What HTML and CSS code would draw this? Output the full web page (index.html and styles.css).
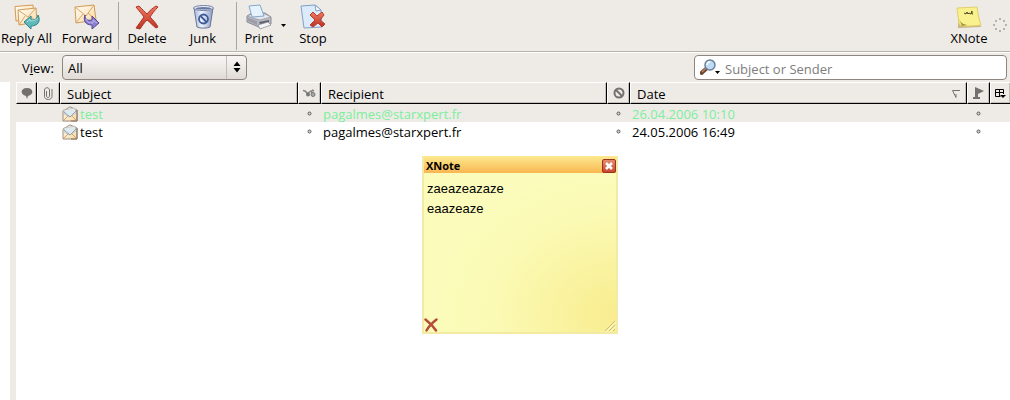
FILE: index.html
```html
<!DOCTYPE html>
<html lang="en">
<head>
    <meta charset="UTF-8">
    <meta name="viewport" content="width=device-width, initial-scale=1.0">
    <title>Mail</title>
    <link rel="stylesheet" href="styles.css">
</head>
<body>
    <!-- Shared icons -->
    <svg class="defs" aria-hidden="true">
        <defs>
            <linearGradient id="paper" x1="0" y1="0" x2="1" y2="1">
                <stop offset="0" stop-color="#fffdf4"/>
                <stop offset="1" stop-color="#f7d9a4"/>
            </linearGradient>
            <linearGradient id="red" x1="0" y1="0" x2="0" y2="1">
                <stop offset="0" stop-color="#f07a62"/>
                <stop offset="1" stop-color="#bb3020"/>
            </linearGradient>
            <linearGradient id="blue" x1="0" y1="0" x2="1" y2="0">
                <stop offset="0" stop-color="#a3b4d8"/>
                <stop offset="0.4" stop-color="#eef3fc"/>
                <stop offset="1" stop-color="#8b9bc4"/>
            </linearGradient>
        </defs>
        <symbol id="mail" viewBox="0 0 16 16">
            <path d="M1 5L8 .8l7 3.200v11H1z" fill="url(#paper)" stroke="#a08f7c"/>
            <path d="M2 4l11-2 1 5-6 4-6-3z" fill="#dfe9f0" stroke="#b3b6b8" stroke-width=".6"/>
            <path d="M1 15L6.500 9.500M15 15L9.500 9.500" fill="none" stroke="#c99a68" stroke-width=".9"/>
            <path d="M2 6l6 5 6-6" fill="none" stroke="#8f9ba5" stroke-width=".9"/>
            <path d="M15 4v11H9" fill="none" stroke="#8c745c"/>
        </symbol>
        <symbol id="dot" viewBox="0 0 5 5">
            <circle cx="2.500" cy="2.500" r="1.500" fill="#ddd" stroke="#555"/>
        </symbol>
    </svg>

    <div class="toolbar">
        <button class="tool reply">
            <svg width="28" height="26" viewBox="0 0 28 26">
                <path d="M2 2.500L20 1l1 14-18 2z" fill="url(#paper)" stroke="#d39a55"/>
                <path d="M5 6l18-2 1 14-18 3z" fill="url(#paper)" stroke="#d39a55"/>
                <path d="M5 6l10 7 8-9M6 21l6-9M24 18l-7-6" fill="none" stroke="#d8a76b"/>
                <path d="M11 18l7-6v4c4 0 6-1 7-5 3 6 0 11-7 11v3z" fill="#5fb9ba" stroke="#26858c"/>
                <path d="M14 18l3-3v2c4 0 6-1 8-3" fill="none" stroke="#a9e2df"/>
            </svg>
            <span>Reply All</span>
        </button>
        <button class="tool forward">
            <svg width="28" height="26" viewBox="0 0 28 26">
                <path d="M2 3l19-2 2 15-20 3z" fill="url(#paper)" stroke="#d39a55"/>
                <path d="M2 3l11 9 8-11M3 19l7-9M23 16l-8-7" fill="none" stroke="#d8a76b"/>
                <path d="M12 11c0 4 2 6 7 5v-4l7 7-7 6v-4c-7 0-9-5-7-10z" fill="#8b80cf" stroke="#544796"/>
                <path d="M13 15c1 3 3 4 7 4v-3l4 3" fill="none" stroke="#bdb5ef"/>
            </svg>
            <span>Forward</span>
        </button>
        <div class="separator"></div>
        <button class="tool delete">
            <svg width="26" height="26" viewBox="0 0 26 26">
                <path d="M2 3l3-1c3 3 6 6 8 8 3-4 6-6 9-8l2 1c-4 4-6 7-8 10 3 3 6 6 8 10l-2 1c-4-3-6-6-9-8-3 3-5 6-7 9l-4-1c3-4 5-7 8-11C8 10 5 7 2 3z" fill="url(#red)" stroke="#ad3428"/>
            </svg>
            <span>Delete</span>
        </button>
        <button class="tool junk">
            <svg width="26" height="26" viewBox="0 0 26 26">
                <path d="M4 4h19l-3 19c-3 1.500-10 1.500-13 0z" fill="url(#blue)" stroke="#6b7595"/>
                <ellipse cx="13.500" cy="4" rx="10" ry="2.500" fill="#e8edf8" stroke="#7582a6"/>
                <ellipse cx="13.500" cy="4.300" rx="8" ry="1.200" fill="#6a789f"/>
                <circle cx="13.500" cy="15" r="4.500" fill="none" stroke="#3e5c9a" stroke-width="1.800"/>
                <path d="M10.500 12l6 6" stroke="#3e5c9a" stroke-width="1.800"/>
            </svg>
            <span>Junk</span>
        </button>
        <div class="separator"></div>
        <button class="tool print">
            <svg width="28" height="26" viewBox="0 0 28 26">
                <path d="M2 12l5-3h13l6 4v7l-10 4-14-6z" fill="#b6b8c2" stroke="#8b8c96"/>
                <path d="M2 12l13 4 11-3-6-3H7z" fill="#e6e7ec" stroke="#95969f" stroke-width=".7"/>
                <path d="M4 2l11-1 4 11-12 1z" fill="#e6f3fd" stroke="#80a9cc"/>
                <path d="M14 18l10-2v3l-8 3z" fill="#62636c"/>
                <path d="M13 21l10-3 3 3-11 4z" fill="#f3f5f8" stroke="#888991" stroke-width=".7"/>
                <path d="M3 14l9 3v4l-9-4z" fill="#9c9da7"/>
            </svg>
            <span>Print</span>
        </button>
        <button class="arrow" aria-label="Print options">
            <svg width="5" height="3" viewBox="0 0 5 3"><path d="M0 0h5L2.500 3z"/></svg>
        </button>
        <button class="tool stop">
            <svg width="26" height="26" viewBox="0 0 26 26">
                <path d="M1 2l14-1 6 5 1 17-18 1z" fill="#dcebfa" stroke="#829fc9"/>
                <path d="M15 1l1 6 5-1z" fill="#fff" stroke="#829fc9"/>
                <path d="M10 11l3-3 4 4 5-4 2 3-4 5 5 4-3 3-4-4-5 4-3-2 5-5z" fill="url(#red)" stroke="#b63c30"/>
            </svg>
            <span>Stop</span>
        </button>
        <button class="tool xnote">
            <svg width="26" height="26" viewBox="0 0 26 26">
                <path d="M2 5l19-1 4 19-21 1H2z" fill="#c9b68a"/>
                <path d="M1 4c7 0 13-1 20-1 1 7 2 13 4 18-6 1-13 1-19 1l-3-2z" fill="#f9f08e" stroke="#e3d06a"/>
                <path d="M3 15l3 7 5-1c-4-1-6-2-8-6z" fill="#a89334"/>
                <path d="M8 9l2 1 1-2 1 2 1-1 2 1 1-3v3h1" fill="none" stroke="#4a4520"/>
            </svg>
            <span>XNote</span>
        </button>
        <svg class="throbber" width="14" height="14" viewBox="0 0 14 14" fill="#a3a19d">
            <circle cx="7" cy="1" r="1"/><circle cx="11" cy="3" r="1"/>
            <circle cx="13" cy="7" r="1"/><circle cx="11" cy="11" r="1"/>
            <circle cx="7" cy="13" r="1"/><circle cx="3" cy="11" r="1"/>
            <circle cx="1" cy="7" r="1"/><circle cx="3" cy="3" r="1"/>
        </svg>
    </div>

    <div class="filter-bar">
        <label for="view">V<u>i</u>ew:</label>
        <div class="select-wrap">
            <select id="view">
                <option>All</option>
            </select>
            <svg class="updown" width="8" height="12" viewBox="0 0 8 12"><path d="M0.500 5L4 .5 7.500 5zM.5 7h7L4 11.500z"/></svg>
        </div>
        <div class="search">
            <svg width="21" height="18" viewBox="0 0 21 18">
                <path d="M1.500 14L7 9" stroke="#70462f" stroke-width="4" stroke-linecap="round"/>
                <path d="M2 13l4-4" stroke="#b98a68" stroke-width="1.500"/>
                <circle cx="10" cy="6" r="5" fill="#bcdcf6" stroke="#6d7f9c" stroke-width="1.500"/>
                <path d="M7 6c0-2 1-3 3-3" fill="none" stroke="#fff" stroke-width="1.500"/>
                <path d="M15 12h5l-2.500 3z"/>
            </svg>
            <input type="text" placeholder="Subject or Sender" aria-label="Subject or Sender">
        </div>
    </div>

    <div class="main">
        <div class="folders"></div>
        <div class="splitter"></div>
        <div class="messages">
            <table>
                <colgroup>
                    <col class="col-thread">
                    <col class="col-icon">
                    <col class="col-subject">
                    <col class="col-icon">
                    <col class="col-recipient">
                    <col class="col-icon">
                    <col>
                    <col class="col-icon">
                    <col class="col-picker">
                </colgroup>
                <thead>
                    <tr>
                        <th class="icon" aria-label="Thread">
                            <svg width="12" height="11" viewBox="0 0 12 11"><path d="M6 0c7 0 7 7 1 8l-1 3-1-3C-1 7-1 0 6 0z" fill="#73716e"/></svg>
                        </th>
                        <th class="icon" aria-label="Attachment">
                            <svg width="9" height="13" viewBox="0 0 9 13"><path d="M2.500 4v5c0 2 3 2 3 0V3c0-3-5-3-5 0v6.500c0 4 7.500 4 7.500 0V2" fill="none" stroke="#73716e"/></svg>
                        </th>
                        <th>Subject</th>
                        <th class="icon" aria-label="Read">
                            <svg width="13" height="9" viewBox="0 0 13 9"><path d="M0 1.500l2 .5 3 3M5 4l3-2 2 3M9 1l2 1" fill="none" stroke="#85827f" stroke-width="1.500"/><circle cx="5" cy="5.500" r="2" fill="#777"/><circle cx="10" cy="5.500" r="2" fill="#aaa" stroke="#777"/></svg>
                        </th>
                        <th>Recipient</th>
                        <th class="icon" aria-label="Junk status">
                            <svg width="12" height="12" viewBox="0 0 12 12"><circle cx="6" cy="6" r="4.500" fill="none" stroke="#73716e" stroke-width="2"/><path d="M3 3l6 6" stroke="#73716e" stroke-width="2"/></svg>
                        </th>
                        <th>
                            <div class="sorted">
                                Date
                                <svg width="8" height="8" viewBox="0 0 8 8"><path d="M8 .5H.5L4 7.500V4" fill="none" stroke="#73716e"/></svg>
                            </div>
                        </th>
                        <th class="icon" aria-label="Flag">
                            <svg width="11" height="12" viewBox="0 0 11 12"><path d="M2 0l9 4-6 3v3h2v2H0v-2h2z" fill="#73716e"/></svg>
                        </th>
                        <th class="icon picker" aria-label="Columns">
                            <svg width="11" height="11" viewBox="0 0 11 11"><path d="M.5 1.500h8v3h-8zM4.500 1v7M.5 4v4.500h5M8.500 4v2" fill="none" stroke="#000"/><path d="M5 7h6l-3 3z"/></svg>
                        </th>
                    </tr>
                </thead>
                <tbody>
                    <tr class="tagged">
                        <td></td>
                        <td></td>
                        <td class="subject"><div><svg width="16" height="16"><use href="#mail"/></svg>test</div></td>
                        <td class="icon"><svg width="5" height="5"><use href="#dot"/></svg></td>
                        <td>pagalmes@starxpert.fr</td>
                        <td class="icon"><svg width="5" height="5"><use href="#dot"/></svg></td>
                        <td>26.04.2006 10:10</td>
                        <td class="icon"><svg width="5" height="5"><use href="#dot"/></svg></td>
                        <td></td>
                    </tr>
                    <tr>
                        <td></td>
                        <td></td>
                        <td class="subject"><div><svg width="16" height="16"><use href="#mail"/></svg>test</div></td>
                        <td class="icon"><svg width="5" height="5"><use href="#dot"/></svg></td>
                        <td>pagalmes@starxpert.fr</td>
                        <td class="icon"><svg width="5" height="5"><use href="#dot"/></svg></td>
                        <td>24.05.2006 16:49</td>
                        <td class="icon"><svg width="5" height="5"><use href="#dot"/></svg></td>
                        <td></td>
                    </tr>
                </tbody>
            </table>
        </div>
    </div>

    <!-- Floating note -->
    <div class="note">
        <div class="note-title">
            <span>XNote</span>
            <button class="note-close" aria-label="Close">
                <svg width="8" height="8" viewBox="0 0 8 8"><path d="M1 1l6 6M7 1L1 7" stroke="#fff" stroke-width="2.500"/></svg>
            </button>
        </div>
        <textarea aria-label="Note text">zaeazeazaze
eaazeaze</textarea>
        <div class="note-footer">
            <button aria-label="Delete note">
                <svg width="14" height="14" viewBox="0 0 14 14"><path d="M1.500 1.500C6 5 9 8 12 12.500M12.500 1.500C8 5 5 8 2.500 12.500" fill="none" stroke="#b54d38" stroke-width="2.500" stroke-linecap="round"/></svg>
            </button>
            <svg width="12" height="12" viewBox="0 0 12 12"><path d="M1 11L11 1M5 11l6-6M9 11l2-2" stroke="#cdbd80"/><path d="M2 12L12 2M6 12l6-6" stroke="#fffbd0"/></svg>
        </div>
    </div>
</body>
</html>
```
FILE: styles.css
```css
* {
    box-sizing: border-box;
}
body {
    margin: 0;
    min-height: 100vh;
    display: flex;
    flex-direction: column;
    background-color: #eeebe7;
    color: #000000;
    font-family: "Open Sans", "Noto Sans", sans-serif;
    font-size: 13px;
    line-height: 18px;
}
svg {
    display: block;
    flex-shrink: 0;
}
button {
    border: none;
    background: none;
    padding: 0;
    color: inherit;
    font: inherit;
}
.defs {
    position: absolute;
    width: 0;
    height: 0;
}

/* Toolbar */
.toolbar {
    display: flex;
    height: 52px;
    padding-top: 4px;
    border-bottom: 1px solid #b7b1aa;
}
.tool {
    display: flex;
    flex-direction: column;
    align-items: center;
    height: 42px;
    white-space: nowrap;
}
.tool span {
    line-height: 16px;
}
.reply {
    width: 53px;
}
.forward {
    width: 68px;
}
.separator {
    width: 1px;
    height: 48px;
    margin-top: -2px;
    margin-left: -3px;
    background-color: #aaa59e;
}
.delete,
.junk {
    width: 56px;
}
.junk {
    margin-right: 8px;
}
.print {
    width: 44px;
}
.arrow {
    width: 5px;
    height: 42px;
}
.stop {
    width: 54px;
}
.xnote {
    width: 44px;
    margin-left: auto;
}
.throbber {
    margin: 14px 3px 0 2px;
}

/* View filter and quick search */
.filter-bar {
    display: flex;
    height: 30px;
    padding: 2px 3px 1px 22px;
    border-top: 1px solid #ffffff;
}
.filter-bar label {
    width: 40px;
    padding-top: 4px;
}
.select-wrap {
    position: relative;
    width: 185px;
    height: 25px;
}
.select-wrap select {
    appearance: none;
    width: 100%;
    height: 100%;
    padding: 0 5px;
    border: 1px solid #8e867e;
    border-radius: 4px;
    background: linear-gradient(#f8f6f4, #e0dbd6);
    color: inherit;
    font: inherit;
}
.updown {
    position: absolute;
    top: 6px;
    right: 6px;
}
.select-wrap::after {
    content: "";
    position: absolute;
    top: 1px;
    bottom: 1px;
    right: 20px;
    width: 1px;
    background-color: #c3bdb6;
}
.search {
    display: flex;
    align-items: center;
    width: 313px;
    height: 25px;
    margin-left: auto;
    padding-left: 5px;
    border: 1px solid #8e867e;
    border-radius: 4px;
    background-color: #ffffff;
}
.search input {
    flex: 1;
    min-width: 0;
    height: 20px;
    padding: 2px 4px 0;
    border: none;
    outline: none;
    background: none;
    font: inherit;
}
.search input::placeholder {
    color: #7d7d7d;
    opacity: 1;
}

/* Message list */
.main {
    display: flex;
    flex: 1;
}
.folders {
    width: 10px;
    background-color: #ffffff;
}
.splitter {
    width: 6px;
}
.messages {
    flex: 1;
    background-color: #ffffff;
}
table {
    width: 100%;
    table-layout: fixed;
    border-collapse: separate;
    border-spacing: 0;
}
.col-thread {
    width: 21px;
}
.col-picker {
    width: 20px;
}
.col-icon {
    width: 23px;
}
.col-subject {
    width: 238px;
}
.col-recipient {
    width: 286px;
}
th {
    height: 22px;
    padding: 2px 6px 0;
    border-top: 1px solid #ffffff;
    border-left: 1px solid #ffffff;
    border-right: 1px solid #000000;
    border-bottom: 1px solid #000000;
    box-shadow: inset -1px -1px #c5c0ba;
    background-color: #eeebe7;
    font-weight: normal;
    text-align: left;
}
td {
    height: 18px;
    padding: 0 2px;
    line-height: 16px;
    vertical-align: bottom;
    white-space: nowrap;
}
th.icon,
td.icon {
    padding: 0;
}
td.icon {
    vertical-align: middle;
}
.icon svg {
    margin: 0 auto;
}
.picker {
    border-right: none;
}
.sorted {
    display: flex;
    align-items: center;
    justify-content: space-between;
}
.subject div {
    display: flex;
    align-items: center;
    gap: 2px;
}
.tagged {
    background-color: #eeebe7;
    color: #7cee9c;
}

/* Note window */
.note {
    position: absolute;
    top: 156px;
    left: 422px;
    display: flex;
    flex-direction: column;
    width: 196px;
    height: 178px;
    border: 2px solid #f3eba3;
    border-top: none;
    background: radial-gradient(ellipse at 100% 90%, #f8ec8e, #fbfab4 45%, #fbfcbc 70%);
}
.note-title {
    display: flex;
    align-items: center;
    justify-content: space-between;
    height: 17px;
    padding: 2px 0 0 2px;
    background: linear-gradient(#fdea90, #f9b650);
    font-size: 11px;
    font-weight: bold;
}
.note-close {
    display: flex;
    align-items: center;
    justify-content: center;
    width: 14px;
    height: 14px;
    border: 1px solid #98321f;
    border-radius: 2px;
    background: linear-gradient(#e58a6d, #c9482f);
}
.note textarea {
    flex: 1;
    padding: 6px 3px;
    border: none;
    outline: none;
    resize: none;
    background: none;
    color: #000000;
    font-family: "Liberation Sans", Arial, sans-serif;
    font-size: 13px;
    line-height: 20px;
}
.note-footer {
    display: flex;
    align-items: flex-end;
    justify-content: space-between;
    height: 14px;
}
```
